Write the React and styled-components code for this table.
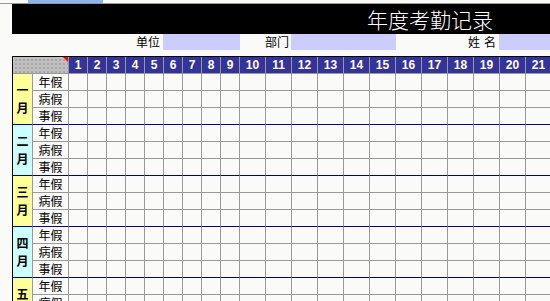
import React from "react";
import styled, { createGlobalStyle } from "styled-components";

const Global = createGlobalStyle`
  html, body { margin: 0; padding: 0; overflow: hidden; background: #fafaf8; }
  body { font-family: "Noto Sans CJK SC", "Liberation Sans", sans-serif; }
`;

const Page = styled.div`
  width: 550px;
  height: 301px;
  overflow: hidden;
  background: #fafaf8;
`;

const TopStrip = styled.div`
  height: 3px;
  border-bottom: 1px solid #9a978f;
  display: flex;
`;

const StripTab = styled.div`
  margin-left: 28px;
  width: 75px;
  background: #8db4ef;
`;

const TitleBar = styled.div`
  margin-left: 12px;
  height: 30px;
  background: #000;
  display: flex;
  align-items: center;
  padding-left: 355px;
`;

const Title = styled.div`
  color: #fff;
  font-size: 21px;
  font-weight: 300;
  line-height: 30px;
  white-space: nowrap;
`;

const InfoRow = styled.div`
  height: 16px;
  display: flex;
  align-items: stretch;
  margin-bottom: 6px;
`;

const InfoLabel = styled.div`
  width: ${(p) => p.$w}px;
  margin-right: ${(p) => p.$gap}px;
  display: flex;
  justify-content: flex-end;
  gap: ${(p) => p.$inner || 0}px;
  font-size: 12px;
  line-height: 16px;
  color: #000;
  white-space: nowrap;
`;

const Field = styled.div`
  width: ${(p) => (p.$w ? p.$w + "px" : "auto")};
  flex: ${(p) => (p.$w ? "none" : "1")};
  background: #ccccff;
`;

const Sheet = styled.div`
  margin-left: 12px;
  border-left: 1px solid #000;
  border-top: 1px solid #000;
  display: grid;
  grid-template-columns: 20px 36px repeat(9, 19px) repeat(22, 26px);
  grid-auto-rows: 17px;
  width: max-content;
`;

const Cell = styled.div`
  box-sizing: border-box;
  border-right: 1px solid #999;
  border-bottom: 1px solid ${(p) => (p.$sep ? "#000080" : "#999")};
`;

const Corner = styled(Cell)`
  grid-column: span 2;
  position: relative;
  background-color: #c0c0c0;
  background-image: radial-gradient(#a6a6a6 0.8px, transparent 0.9px);
  background-size: 4px 4px;
  background-position: 1px 1px;
`;

const RedMark = styled.div`
  position: absolute;
  top: 0;
  right: 0;
  width: 0;
  height: 0;
  border-top: 5px solid #ff0000;
  border-left: 5px solid transparent;
`;

const DayHead = styled(Cell)`
  background: #333399;
  color: #fff;
  font-family: "Liberation Sans", Arial, sans-serif;
  font-weight: bold;
  font-size: 12px;
  line-height: 16px;
  text-align: center;
`;

const MonthCell = styled(Cell)`
  grid-row: span 3;
  background: ${(p) => (p.$alt ? "#ccffff" : "#ffff99")};
  border-bottom-color: #000080;
  display: flex;
  flex-direction: column;
  align-items: center;
  justify-content: center;
  font-size: 12px;
  font-weight: bold;
  line-height: 18px;
  color: #000;
`;

const TypeCell = styled(Cell)`
  font-size: 12px;
  line-height: 16px;
  text-align: center;
  color: #000;
`;

const months = ["一", "二", "三", "四", "五", "六", "七", "八", "九", "十", "十一", "十二"];
const types = ["年假", "病假", "事假"];
const days = Array.from({ length: 31 }, (_, i) => i + 1);

export default function App() {
  return (
    <Page>
      <Global />
      <TopStrip>
        <StripTab />
      </TopStrip>
      <TitleBar>
        <Title>年度考勤记录</Title>
      </TitleBar>
      <InfoRow>
        <InfoLabel $w={160} $gap={3}>单位</InfoLabel>
        <Field $w={77} />
        <InfoLabel $w={49} $gap={2}>部门</InfoLabel>
        <Field $w={105} />
        <InfoLabel $w={100} $gap={3} $inner={4}>
          <span>姓</span>
          <span>名</span>
        </InfoLabel>
        <Field />
      </InfoRow>
      <Sheet>
        <Corner>
          <RedMark />
        </Corner>
        {days.map((d) => (
          <DayHead key={d}>{d}</DayHead>
        ))}
        {months.map((m, mi) => (
          <React.Fragment key={m}>
            {types.map((t, ti) => (
              <React.Fragment key={t}>
                {ti === 0 && (
                  <MonthCell $alt={mi % 2 === 1}>
                    {[...m, "月"].map((c, ci) => (
                      <span key={ci}>{c}</span>
                    ))}
                  </MonthCell>
                )}
                <TypeCell $sep={ti === 2}>{t}</TypeCell>
                {days.map((d) => (
                  <Cell key={d} $sep={ti === 2} />
                ))}
              </React.Fragment>
            ))}
          </React.Fragment>
        ))}
      </Sheet>
    </Page>
  );
}
